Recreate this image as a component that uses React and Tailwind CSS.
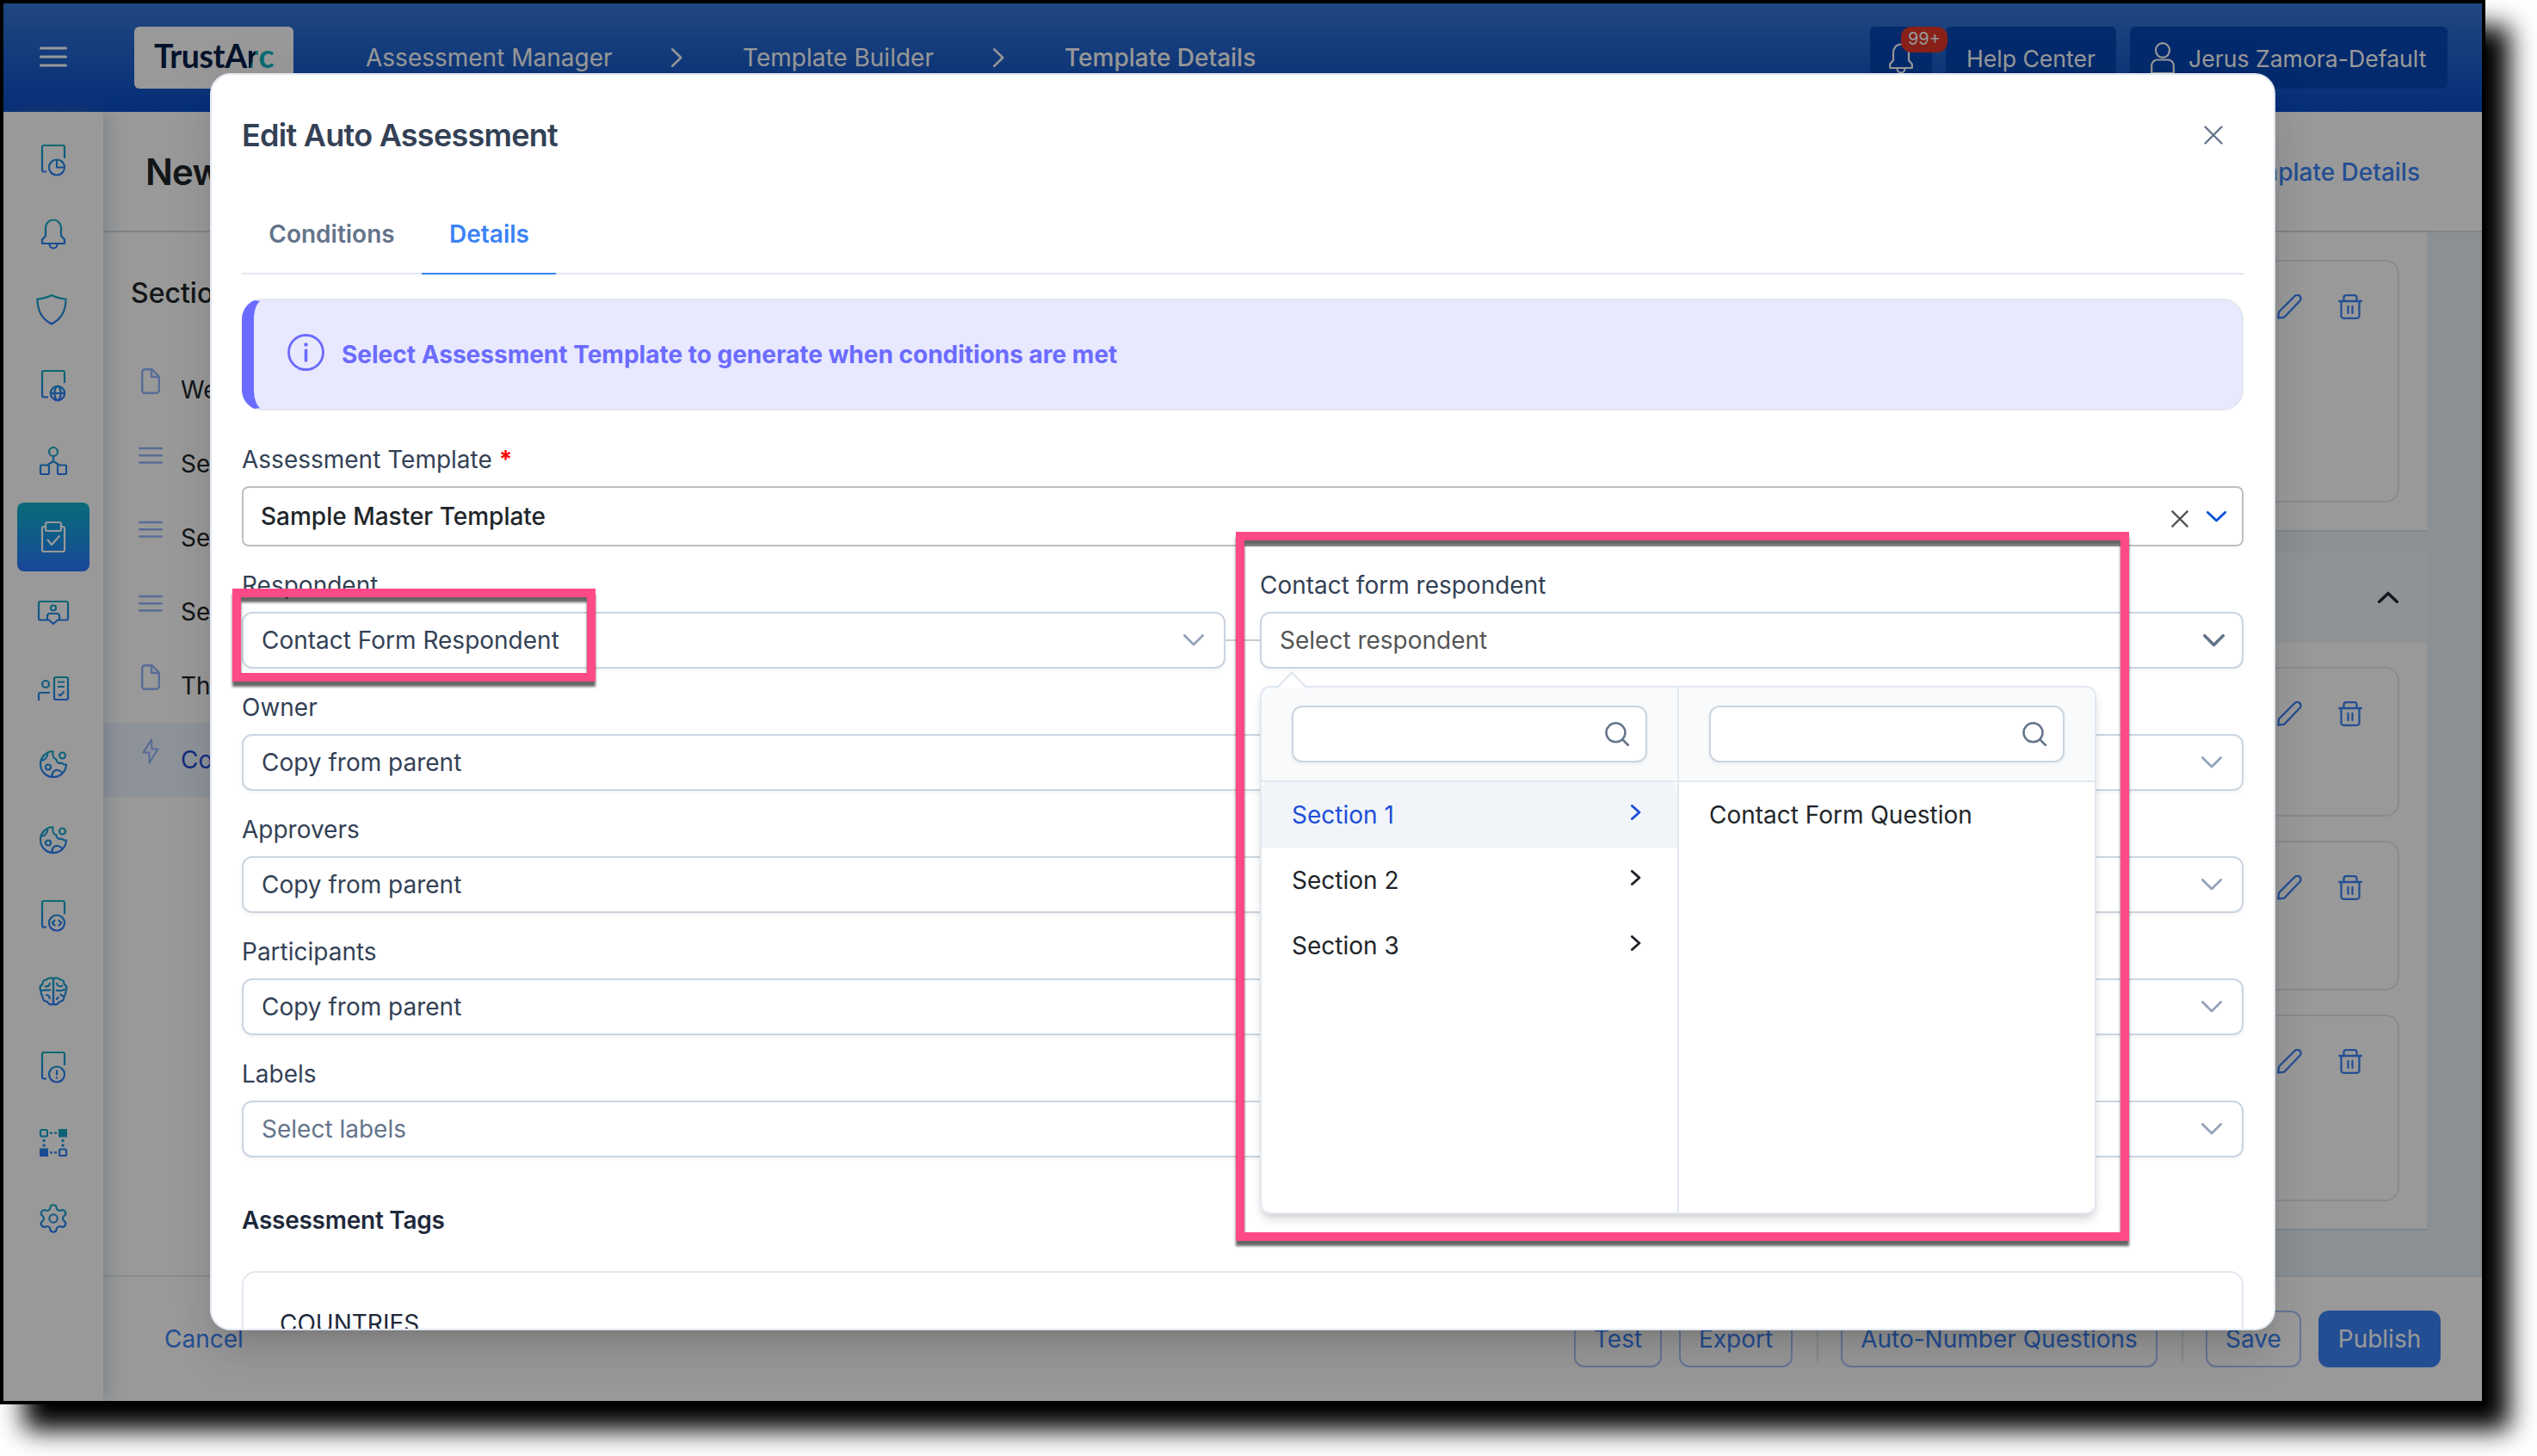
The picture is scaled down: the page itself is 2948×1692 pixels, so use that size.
import React from "react";
import { Settings } from "lucide-react";

function Gradients() {
  return (
    <svg className="absolute h-0 w-0" aria-hidden="true">
      <defs>
        <linearGradient id="navStroke" gradientUnits="userSpaceOnUse" x1="0" y1="2" x2="0" y2="38">
          <stop offset="0" stopColor="#12b0bd" />
          <stop offset="1" stopColor="#2d76ff" />
        </linearGradient>
        <linearGradient id="gearStroke" gradientUnits="userSpaceOnUse" x1="0" y1="1" x2="0" y2="23">
          <stop offset="0" stopColor="#12b0bd" />
          <stop offset="1" stopColor="#2d76ff" />
        </linearGradient>
      </defs>
    </svg>
  );
}

function NavIcon({ children, stroke = "url(#navStroke)" }) {
  return (
    <svg width="40" height="40" viewBox="0 0 40 40" fill="none" stroke={stroke} strokeWidth="2.200" strokeLinejoin="round">
      {children}
    </svg>
  );
}

const docFrame = "M12 33.5H9a2 2 0 0 1-2-2V5a2 2 0 0 1 2-2H31a2 2 0 0 1 2 2V18";

const Cookie = () => (
  <NavIcon>
    <path d="M19.500 5A15 15 0 1 0 35 20.500C32 20.800 30.500 19.500 29.500 18.500C26 20 23.500 17.500 23.500 14.500C20.500 13.500 18.500 10 19.500 5Z" />
    <circle cx="30.500" cy="10" r="3.500" />
    <circle cx="14" cy="23.500" r="3" />
    <path d="M18.500 34.500C18 29 22 26 25.500 27C28 27.600 29.500 29 30.500 30.500M6.500 15.500C9 16 13 13 13.500 7.500" />
  </NavIcon>
);

const navItems = [
  <NavIcon>
    <path d={docFrame} />
    <circle cx="24" cy="28.500" r="9" />
    <path d="M24 19.500V28.500H33" />
  </NavIcon>,
  <NavIcon>
    <path d="M7 31V26.500L11 22V13a9 9.500 0 0 1 18 0V22L33 26.500V31Z" />
    <path d="M15.500 31.500a4.500 5 0 0 0 9 0" />
  </NavIcon>,
  <NavIcon>
    <path d="M18 3C13 6 8 7 1.500 7.500C1.500 21 6 30.500 18 36.500C30 30.500 34.500 21 34.500 7.500C28 7 23 6 18 3Z" />
  </NavIcon>,
  <NavIcon>
    <path d="M14 33.500H9a2 2 0 0 1-2-2V5a2 2 0 0 1 2-2H31a2 2 0 0 1 2 2V17" />
    <circle cx="25" cy="29" r="8.200" />
    <ellipse cx="25" cy="29" rx="3.600" ry="8.200" />
    <path d="M17 29H33" />
  </NavIcon>,
  <NavIcon>
    <circle cx="20" cy="9" r="5" />
    <rect x="5" y="24.500" width="10" height="10.500" rx="1" />
    <rect x="25" y="24.500" width="10" height="10.500" rx="1" />
    <path d="M20 14V20M13 24.500L20 20L27 24.500" />
  </NavIcon>,
  <NavIcon stroke="#ffffff">
    <path d="M11 8H9a2 2 0 0 0-2 2V35a2 2 0 0 0 2 2H31a2 2 0 0 0 2-2V10a2 2 0 0 0-2-2H29" />
    <rect x="11" y="3" width="18" height="10" rx="2" />
    <path d="M13 23L18 29L27.500 18.500" />
  </NavIcon>,
  <NavIcon>
    <path d="M13 28.500H5a2 2 0 0 1-2-2V9a2 2 0 0 1 2-2H35a2 2 0 0 1 2 2V26.500a2 2 0 0 1-2 2H27" />
    <circle cx="20" cy="14.500" r="3" />
    <path d="M13 28.500V24a3 3 0 0 1 3-3H24a3 3 0 0 1 3 3V28.500H25L20 33L15 28.500Z" />
  </NavIcon>,
  <NavIcon>
    <rect x="21" y="7" width="16" height="26" rx="2" />
    <circle cx="11" cy="15" r="4" />
    <path d="M3 34V27a2 2 0 0 1 2-2H16M25 12.500H33M25 18H33M26 26.500L28 28.500L32.500 23.500" />
  </NavIcon>,
  <Cookie />,
  <Cookie />,
  <NavIcon>
    <path d={docFrame} />
    <circle cx="24" cy="28.500" r="9" />
    <path d="M22 25L18.800 28.500L22 32M26 25L29.200 28.500L26 32" />
  </NavIcon>,
  <NavIcon>
    <path d="M20 5.500C17.500 4 14 4 12 6.500C9 6.500 7.500 8.500 7.500 11.500C4.500 13.500 4 17 5.500 20C5.500 22 6 24 7.500 25.500C7 29.500 9.500 32 13 32C14.500 35.500 18 36 20 34.500Z" />
    <path d="M20 5.500C22.500 4 26 4 28 6.500C31 6.500 32.500 8.500 32.500 11.500C35.500 13.500 36 17 34.500 20C34.500 22 34 24 32.500 25.500C33 29.500 30.500 32 27 32C25.500 35.500 22 36 20 34.500Z" />
    <path d="M6 19C10 18 14 19 17 18.500M10 14C13 15 16 13.500 16 10M11 24.500C14 23.500 16 26 15.500 29M24 10C24 13.500 27 15 31 13.500M23 18.500C26 20 31 19.500 34 17M24 30C24 28 25 27 26.500 26.500M28 23C29 25 31 25.500 32.500 25.500" />
  </NavIcon>,
  <NavIcon>
    <path d={docFrame} />
    <circle cx="24" cy="28.500" r="9" />
    <path d="M24 23.500V29.500M24 31.500V33.500" />
  </NavIcon>,
  <NavIcon>
    <rect x="5" y="5" width="8" height="7.500" rx="1.500" />
    <rect x="27" y="27.500" width="8" height="7.500" rx="1.500" />
    <rect x="26" y="4" width="10" height="9.500" fill="url(#navStroke)" stroke="none" />
    <rect x="4" y="26.500" width="10" height="9.500" fill="url(#navStroke)" stroke="none" />
    <path d="M16 8.700H19M21 8.700H24M16 31.300H19M21 31.300H24" />
    <path d="M9 16V19M9 21.500V24.500M31 16V19M31 21.500V24.500" strokeWidth="3" />
  </NavIcon>,
  <Settings size={38} stroke="url(#gearStroke)" strokeWidth={1.35} />,
];

function Chevron({ dir = "down", w, h, color, sw = 3 }) {
  const d = {
    down: `M${sw / 2} ${sw / 2}L${w / 2} ${h - sw * 0.7}L${w - sw / 2} ${sw / 2}`,
    up: `M${sw / 2} ${h - sw / 2}L${w / 2} ${sw * 0.7}L${w - sw / 2} ${h - sw / 2}`,
    right: `M${sw / 2} ${sw / 2}L${w - sw * 0.7} ${h / 2}L${sw / 2} ${h - sw / 2}`,
  }[dir];
  return (
    <svg width={w} height={h} viewBox={`0 0 ${w} ${h}`} fill="none" stroke={color} strokeWidth={sw} strokeLinecap="round" strokeLinejoin="round" className="shrink-0">
      <path d={d} />
    </svg>
  );
}

function Cross({ size, color, sw }) {
  return (
    <svg width={size} height={size} viewBox="0 0 22 22" fill="none" stroke={color} strokeWidth={sw} strokeLinecap="round" className="shrink-0">
      <path d="M1.500 1.500L20.500 20.500M20.500 1.500L1.500 20.500" />
    </svg>
  );
}

function SearchIcon() {
  return (
    <svg width="28" height="28" viewBox="0 0 28 28" fill="none" stroke="#64748b" strokeWidth="2.500" strokeLinecap="round">
      <circle cx="12.500" cy="12.300" r="11" />
      <path d="M20.500 20.500L27 27" />
    </svg>
  );
}

function Pencil() {
  return (
    <svg width="29" height="29" viewBox="0 0 29 29" fill="none" stroke="#3b82f6" strokeWidth="2.300" strokeLinejoin="round">
      <path d="M1.300 27.700L2 20.500L20.300 2.300a3.600 3.600 0 0 1 6.300 5.200L8.200 26.700Z" />
    </svg>
  );
}

function Trash() {
  return (
    <svg width="28" height="29" viewBox="0 0 28 29" fill="none" stroke="#3b82f6" strokeWidth="2.300" strokeLinecap="round" strokeLinejoin="round">
      <path d="M1.200 8H26.800M6.500 8V4a2.800 2.800 0 0 1 2.800-2.800H18.700A2.800 2.800 0 0 1 21.500 4V8M3.500 8V25a2.800 2.800 0 0 0 2.800 2.800H21.700A2.800 2.800 0 0 0 24.500 25V8M11.500 14V22M16.500 14V22" />
    </svg>
  );
}

function FileIcon() {
  return (
    <svg width="22" height="30" viewBox="0 0 22 30" fill="none" stroke="#93b4fb" strokeWidth="2.400" strokeLinejoin="round">
      <path d="M4.500 1.200H12.500L20.800 9.500V25.500a3.300 3.300 0 0 1-3.300 3.300H4.500a3.300 3.300 0 0 1-3.300-3.300V4.500a3.300 3.300 0 0 1 3.300-3.300ZM12 1.500V10H20.500" />
    </svg>
  );
}

function LinesIcon() {
  return (
    <svg width="28" height="20" viewBox="0 0 28 20" stroke="#93b4fb" strokeWidth="2.500" strokeLinecap="round">
      <path d="M1.200 2H26.800M1.200 10.200H26.800M1.200 18.400H26.800" />
    </svg>
  );
}

function BoltIcon() {
  return (
    <svg width="20" height="30" viewBox="0 0 20 30" fill="none" stroke="#93b4fb" strokeWidth="2.200" strokeLinejoin="round">
      <path d="M11 1.500L1.500 16.500H8.500V28.500L18.500 12.500H11.500Z" />
    </svg>
  );
}

function TopBar() {
  return (
    <header className="flex h-[126px] shrink-0 items-center bg-linear-to-b from-[#3576d4] to-[#074dc9] text-[28px] leading-none text-white">
      <svg className="-mt-0.5 ml-[42px]" width="32" height="24" viewBox="0 0 32 24" stroke="#ffffff" strokeWidth="3" strokeLinecap="round">
        <path d="M1.500 2H30.500M1.500 12H30.500M1.500 22H30.500" />
      </svg>
      <div className="ml-[78px] flex h-[72px] w-[185px] items-center justify-center rounded-md bg-white pb-1 font-[Lato] text-[37.5px] font-bold tracking-[-0.4px] text-[#04204a]">
        <span>TrustA</span>
        <span className="bg-linear-to-br from-[#04204a] from-55% to-[#0fb5c0] to-60% bg-clip-text text-transparent">r</span>
        <span className="text-[#0fb5c0]">c</span>
      </div>
      <nav className="ml-[84px] flex items-center">
        <span className="w-[355px]">Assessment Manager</span>
        <Chevron dir="right" w={13} h={22} color="#ffffff" sw={2.5} />
        <span className="ml-[70px] w-[291px]">Template Builder</span>
        <Chevron dir="right" w={13} h={22} color="#ffffff" sw={2.5} />
        <span className="ml-[70px] font-medium">Template Details</span>
      </nav>
      <div className="mr-10 ml-auto flex items-center gap-4 text-[26.6px]">
        <div className="relative flex h-[72px] w-[72px] items-center justify-center rounded-md bg-[#0546b6]">
          <svg className="-ml-[1px]" width="28" height="37" viewBox="6 1 28 37" fill="none" stroke="#ffffff" strokeWidth="2.200" strokeLinejoin="round">
            <path d="M7.200 31V26.500L11 22V13a9 9.500 0 0 1 18 0V22L32.800 26.500V31Z" />
            <path d="M15.500 31.500a4.500 5 0 0 0 9 0" />
          </svg>
          <span className="absolute top-0 left-9 flex h-[30px] w-[54px] items-center justify-center rounded-[12px] bg-[#e4382b] pb-0.5 text-[20px]">99+</span>
        </div>
        <div className="flex h-[72px] w-[198px] items-center justify-center rounded-md bg-[#0546b6] pt-0.5">Help Center</div>
        <div className="flex h-[72px] w-[369px] items-center rounded-md bg-[#0546b6] pl-6">
          <svg width="28" height="37" viewBox="0 0 28 37" fill="none" stroke="#ffffff" strokeWidth="2.200">
            <ellipse cx="14" cy="9.500" rx="8" ry="8.400" />
            <path d="M1.200 36V27a6.500 6.500 0 0 1 6.500-6.500H20.300a6.500 6.500 0 0 1 6.500 6.500V36Z" />
          </svg>
          <span className="ml-4 pt-0.5 whitespace-nowrap">Jerus Zamora-Default</span>
        </div>
      </div>
    </header>
  );
}

function SideNav() {
  return (
    <aside className="relative z-10 flex w-[116px] shrink-0 flex-col items-center bg-white pt-3 shadow-[0_0_24px_rgba(90,120,150,0.4)]">
      {navItems.map((icon, i) => (
        <div key={i} className={i === 0 ? "flex h-[86px] items-center justify-center pt-0.5" : "flex h-[88px] items-center justify-center"}>
          {i === 5 ? (
            <div className="flex h-20 w-[84px] items-center justify-center rounded-lg bg-linear-to-b from-[#14b2c8] to-[#2d76ff]">{icon}</div>
          ) : (
            icon
          )}
        </div>
      ))}
    </aside>
  );
}

const sections = [
  ["file", "Welcome"],
  ["lines", "Section 1"],
  ["lines", "Section 2"],
  ["lines", "Section 3"],
  ["file", "Thank You"],
  ["bolt", "Conditions"],
];

function QuestionCard({ className }) {
  return (
    <div className={"flex items-start justify-end gap-[42px] rounded-2xl border-2 border-[#e2e6f0] pt-[38px] pr-[41px] " + className}>
      <Pencil />
      <Trash />
    </div>
  );
}

function Page() {
  return (
    <div className="flex h-full flex-col bg-white">
      <TopBar />
      <div className="flex min-h-0 flex-1">
        <SideNav />
        <div className="flex min-w-0 flex-1 flex-col">
          <div className="flex h-[140px] shrink-0 items-center justify-between border-b-2 border-[#d5dce2] pt-0.5 pr-[72px] pl-[49px] leading-none">
            <h1 className="text-[42px] font-semibold tracking-[-0.8px] text-[#212529]">New Template</h1>
            <span className="text-[28px] font-medium text-[#3b82f6]">Template Details</span>
          </div>
          <div className="flex min-h-0 flex-1">
            <div className="flex w-[520px] shrink-0 flex-col text-[#212529]">
              <div className="flex h-[140px] items-center pt-0.5 pl-8 text-[32px] leading-none font-medium">Sections</div>
              {sections.map(([kind, label], i) => (
                <div key={label} className={"flex h-[86px] items-center text-[28px] leading-none " + (i === 5 ? "bg-[#edf3ff] text-[#1d4ed8]" : "")}>
                  <div className="mb-5 ml-[40px] flex w-[30px] justify-center">
                    {kind === "file" ? <FileIcon /> : kind === "lines" ? <LinesIcon /> : <BoltIcon />}
                  </div>
                  <span className="ml-5">{label}</span>
                </div>
              ))}
            </div>
            <div className="flex flex-1 flex-col bg-[#e7f0f5] pr-16">
              <div className="h-[348px] border-b-2 border-[#d8e0e6] bg-white pt-8 pr-8 pl-8">
                <QuestionCard className="h-[282px]" />
              </div>
              <div className="mt-6 flex h-[105px] items-center justify-end bg-[#f1f5f9] pr-[33px] pb-0.5">
                <Chevron dir="up" w={24} h={14} color="#1e293b" sw={3.5} />
              </div>
              <div className="flex h-[683px] flex-col gap-7 border-b-2 border-[#d8e0e6] bg-white px-8 pt-7">
                <QuestionCard className="h-[174px]" />
                <QuestionCard className="h-[174px]" />
                <QuestionCard className="h-[217px]" />
              </div>
            </div>
          </div>
          <footer className="flex h-[146px] shrink-0 items-center border-t-2 border-[#e2e6ea] pr-12 pl-[71px] text-[28px] leading-none text-[#3b82f6]">
            <span>Cancel</span>
            <div className="ml-auto flex h-[66px] items-center">
              <div className="flex h-[66px] w-[102px] items-center justify-center rounded-xl border-2 border-[#a9c5fb]">Test</div>
              <div className="ml-5 flex h-[66px] w-[132px] items-center justify-center rounded-xl border-2 border-[#a9c5fb]">Export</div>
              <div className="ml-7 h-14 w-0.5 bg-[#e2e8f0]" />
              <div className="ml-[26px] flex h-[66px] w-[368px] items-center justify-center rounded-xl border-2 border-[#a9c5fb]">Auto-Number Questions</div>
              <div className="ml-7 h-14 w-0.5 bg-[#e2e8f0]" />
              <div className="ml-[26px] flex h-[66px] w-[111px] items-center justify-center rounded-xl border-2 border-[#a9c5fb]">Save</div>
              <div className="ml-5 flex h-[66px] w-[142px] items-center justify-center rounded-xl bg-[#3b82f6] text-white">Publish</div>
            </div>
          </footer>
        </div>
      </div>
    </div>
  );
}

function SelectField({ label, value, muted }) {
  return (
    <div className="pt-[25px]">
      <div className="flex h-10 items-center text-[#334155]">{label}</div>
      <div className="mt-[11px] flex h-[66px] items-center justify-between rounded-xl border-2 border-[#cbd5e1] bg-white pr-[23px] pl-[21px] shadow-[0_2px_4px_rgba(18,18,23,0.05)]">
        <span className={muted ? "text-[#64748b]" : "text-[#334155]"}>{value}</span>
        <Chevron w={24} h={14} color="#94a3b8" sw={2.8} />
      </div>
    </div>
  );
}

function SearchBox() {
  return (
    <div className="flex h-[110px] items-center border-b-2 border-[#e2e8f0] bg-[#f8fafc] px-[35px]">
      <div className="flex h-[66px] w-full items-center justify-end rounded-xl border-2 border-[#cbd5e1] bg-white pr-[19px] shadow-[0_2px_4px_rgba(18,18,23,0.05)]">
        <SearchIcon />
      </div>
    </div>
  );
}

function RespondentMenu() {
  return (
    <div className="absolute top-[86px] left-0 z-10 flex h-[614px] w-[972px] rounded-xl border-2 border-[#e2e8f0] bg-white shadow-[0_8px_12px_-2px_rgba(0,0,0,0.14),0_4px_8px_-4px_rgba(0,0,0,0.1)]">
      <svg className="absolute -top-[19px] left-[17px]" width="36" height="20" viewBox="0 0 36 20" fill="#ffffff">
        <path d="M0 20L18 1.500L36 20" stroke="#e2e8f0" strokeWidth="2.500" />
      </svg>
      <div className="w-[485px] overflow-hidden rounded-tl-xl border-r-2 border-[#e2e8f0]">
        <SearchBox />
        {["Section 1", "Section 2", "Section 3"].map((name, i) => (
          <div key={name} className={"flex h-[76px] items-center justify-between pr-[42px] pl-[35px] " + (i === 0 ? "rounded-t-lg bg-[#f1f5f9] text-[#1d4ed8]" : "text-[#212529]")}>
            <span>{name}</span>
            <span className="mb-1.5">
              <Chevron dir="right" w={12} h={18} color={i === 0 ? "#1d4ed8" : "#212529"} sw={3} />
            </span>
          </div>
        ))}
      </div>
      <div className="flex-1 overflow-hidden rounded-tr-xl">
        <SearchBox />
        <div className="flex h-[76px] items-center pl-[35px] text-[#212529]">Contact Form Question</div>
      </div>
    </div>
  );
}

function Modal() {
  return (
    <div className="absolute top-[81px] left-[240px] h-[1461px] w-[2400px] rounded-3xl shadow-[0_40px_50px_-10px_rgba(0,0,0,0.1),0_16px_20px_-12px_rgba(0,0,0,0.1),0_0_60px_rgba(0,0,0,0.06)]">
      <div className="h-full overflow-hidden rounded-3xl border-2 border-[#e2e8f0] bg-white px-[35px] text-[28px] leading-none">
        <div className="flex h-[140px] items-center justify-between pr-6">
          <h2 className="text-[36px] font-semibold tracking-[-0.74px] text-[#334155]">Edit Auto Assessment</h2>
          <Cross size={22} color="#64748b" sw={2.4} />
        </div>
        <div className="flex h-[92px] border-b-2 border-[#e2e8f0] font-semibold">
          <div className="flex w-[209px] items-center justify-center text-[#64748b]">Conditions</div>
          <div className="-mb-0.5 flex w-[156px] items-center justify-center border-b-2 border-[#3b82f6] pl-px text-[#3b82f6]">Details</div>
        </div>
        <div className="mt-7 flex h-[130px] items-center rounded-3xl border-2 border-l-[14px] border-[#e2e8f0] border-l-[#6b6bff] bg-[#e8e8ff] pl-[39px] font-bold text-[#6b6bff]">
          <svg className="-mt-1.5" width="43" height="43" viewBox="0 0 43 43" fill="none" stroke="#6b6bff" strokeWidth="2.800" strokeLinecap="round">
            <circle cx="21.500" cy="21.500" r="20" />
            <path d="M21.500 19V31" strokeWidth="3.600" />
            <path d="M21.500 12.500V12.600" strokeWidth="4.400" />
          </svg>
          <span className="ml-[20px]">Select Assessment Template to generate when conditions are met</span>
        </div>

        <div className="mt-9 flex h-10 items-center gap-2 pt-0.5 text-[#334155]">
          Assessment Template <span className="font-bold text-[#ff0000]">*</span>
        </div>
        <div className="mt-3 flex h-[70px] items-center rounded-lg border-2 border-[#bfbfbf] bg-white pl-5 font-medium text-[#212529]">
          <span className="mr-auto">Sample Master Template</span>
          <span className="mt-1.5">
            <Cross size={20} color="#555555" sw={2.6} />
          </span>
          <span className="mr-[18px] ml-[21px]">
            <Chevron w={23} h={13} color="#0052d9" sw={2.8} />
          </span>
        </div>

        <div className="flex">
          <div className="w-[1143px]">
            <SelectField label="Respondent" value="Contact Form Respondent" />
          </div>
          <div className="mt-[108px] h-0.5 w-10 bg-[#cccccc]" />
          <div className="flex-1 pt-[25px]">
            <div className="flex h-10 items-center text-[#334155]">Contact form respondent</div>
            <div className="relative mt-[11px]">
              <div className="flex h-[66px] items-center justify-between rounded-xl border-2 border-[#cbd5e1] bg-white pr-[20px] pl-[21px] shadow-[0_2px_4px_rgba(18,18,23,0.05)]">
                <span className="text-[#555555]">Select respondent</span>
                <Chevron w={25} h={15} color="#64748b" sw={3.6} />
              </div>
              <RespondentMenu />
            </div>
          </div>
        </div>
        <SelectField label="Owner" value="Copy from parent" />
        <SelectField label="Approvers" value="Copy from parent" />
        <SelectField label="Participants" value="Copy from parent" />
        <SelectField label="Labels" value="Select labels" muted />

        <div className="mt-[52px] flex h-10 items-center pt-0.5 font-semibold tracking-[-0.25px] text-[#1e293b]">Assessment Tags</div>
        <div className="mt-10 h-40 rounded-2xl border-2 border-[#e2e8f0] pt-[39px] pl-[42px]">
          <div className="flex h-10 items-center text-[#1e293b]">COUNTRIES</div>
        </div>
      </div>
    </div>
  );
}

export default function App() {
  return (
    <div className="relative h-[1692px] w-[2948px] overflow-hidden bg-white font-[Inter,sans-serif]">
      <Gradients />
      <div className="h-[1632px] w-[2888px] border-4 border-black bg-black shadow-[28px_30px_28px_#000]">
        <div className="relative h-full overflow-hidden">
          <Page />
          <div className="absolute inset-0 z-20 bg-black/40">
            <Modal />
          </div>
        </div>
      </div>
      <div className="absolute top-[684px] left-[270px] z-30 h-[108px] w-[422px] border-10 border-[#ff4a88] drop-shadow-[0_6px_1.5px_rgba(0,0,0,0.6)]" />
      <div className="absolute top-[618px] left-[1436px] z-30 h-[824px] w-[1038px] border-10 border-[#ff4a88] drop-shadow-[0_6px_1.5px_rgba(0,0,0,0.6)]" />
    </div>
  );
}
